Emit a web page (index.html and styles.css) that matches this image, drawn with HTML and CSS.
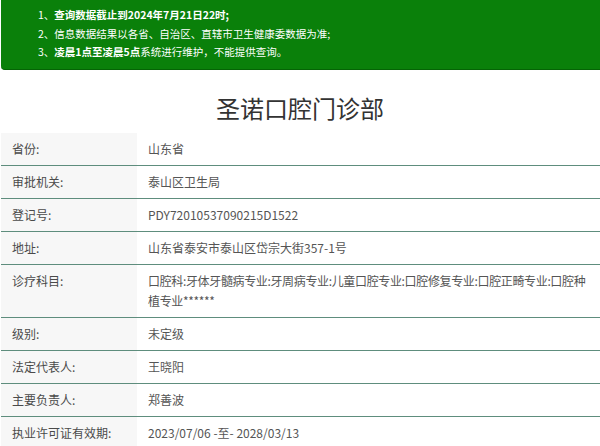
FILE: index.html
```html
<!DOCTYPE html>
<html lang="zh-CN">
<head>
<meta charset="utf-8">
<title>圣诺口腔门诊部</title>
<link rel="stylesheet" href="styles.css">
</head>
<body>
<div class="notice">
  <p>1、<b>查询数据截止到2024年7月21日22时;</b></p>
  <p>2、信息数据结果以各省、自治区、直辖市卫生健康委数据为准;</p>
  <p>3、<b>凌晨1点至凌晨5点</b>系统进行维护，不能提供查询。</p>
</div>
<h1 class="title">圣诺口腔门诊部</h1>
<div class="info">
  <div class="row"><div class="label">省份:</div><div class="value">山东省</div></div>
  <div class="row"><div class="label">审批机关:</div><div class="value">泰山区卫生局</div></div>
  <div class="row"><div class="label">登记号:</div><div class="value">PDY72010537090215D1522</div></div>
  <div class="row"><div class="label">地址:</div><div class="value">山东省泰安市泰山区岱宗大街357-1号</div></div>
  <div class="row"><div class="label">诊疗科目:</div><div class="value tight">口腔科:牙体牙髓病专业:牙周病专业:儿童口腔专业:口腔修复专业:口腔正畸专业:口腔种植专业******</div></div>
  <div class="row"><div class="label">级别:</div><div class="value">未定级</div></div>
  <div class="row"><div class="label">法定代表人:</div><div class="value">王晓阳</div></div>
  <div class="row"><div class="label">主要负责人:</div><div class="value">郑善波</div></div>
  <div class="row"><div class="label">执业许可证有效期:</div><div class="value">2023/07/06 -至- 2028/03/13</div></div>
</div>
</body>
</html>
```
FILE: styles.css
```css
html, body {
  margin: 0;
  padding: 0;
  background: #ffffff;
}
body {
  width: 600px;
  overflow: hidden;
  font-family: "Noto Sans CJK SC", "Noto Sans", sans-serif;
}
.notice {
  margin-left: 1px;
  background: #0a800a;
  border-bottom: 1px solid #056405;
  border-radius: 0 0 0 4px;
  color: #ffffff;
  font-size: 10.5px;
  line-height: 18.5px;
  padding: 6px 0 7.5px 37px;
}
.notice p {
  margin: 0;
}
.notice b {
  font-weight: 700;
}
.title {
  margin: 0;
  padding: 21px 0 8px;
  text-align: center;
  font-size: 24px;
  line-height: 34px;
  font-weight: 400;
  color: #333333;
}
.info {
  margin-left: 1px;
}
.row {
  display: flex;
  border-bottom: 1px solid #5e8d7d;
  font-size: 12px;
  line-height: 20px;
}
.label {
  width: 125px;
  flex: none;
  padding: 6px 0 6px 11px;
  background: #f7f7f7;
  color: #4a4a4a;
}
.value {
  flex: 1;
  padding: 6px 4px 6px 11px;
  color: #555555;
}
.tight {
  letter-spacing: -0.35px;
}
```
